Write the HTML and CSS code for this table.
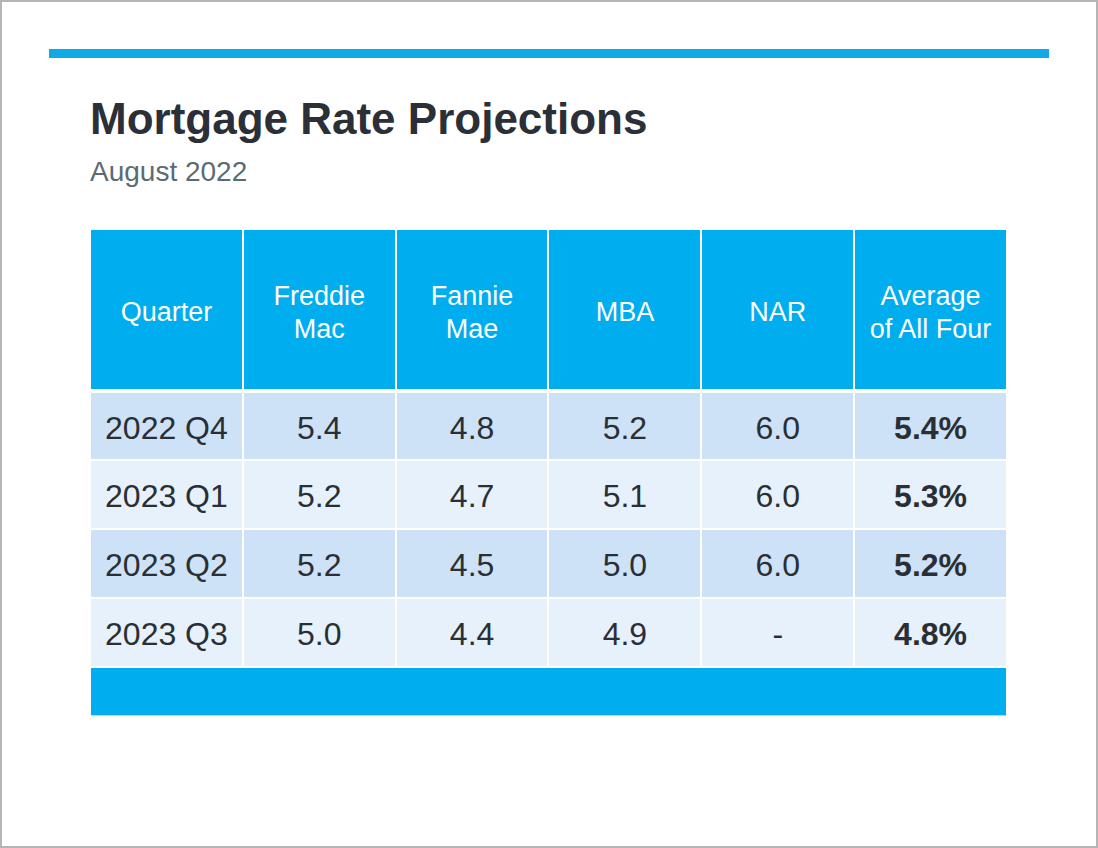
FILE: index.html
```html
<!DOCTYPE html>
<html lang="en">
<head>
<meta charset="utf-8">
<title>Mortgage Rate Projections</title>
<link rel="stylesheet" href="styles.css">
</head>
<body>
<div class="page">
  <div class="top-bar"></div>
  <div class="content">
    <h1 class="title">Mortgage Rate Projections</h1>
    <p class="subtitle">August 2022</p>
    <div class="rate-table">
      <div class="cell head"><span>Quarter</span></div>
      <div class="cell head"><span>Freddie<br>Mac</span></div>
      <div class="cell head"><span>Fannie<br>Mae</span></div>
      <div class="cell head"><span>MBA</span></div>
      <div class="cell head"><span>NAR</span></div>
      <div class="cell head"><span>Average<br>of All Four</span></div>

      <div class="cell dark">2022 Q4</div>
      <div class="cell dark">5.4</div>
      <div class="cell dark">4.8</div>
      <div class="cell dark">5.2</div>
      <div class="cell dark">6.0</div>
      <div class="cell dark avg">5.4%</div>

      <div class="cell light">2023 Q1</div>
      <div class="cell light">5.2</div>
      <div class="cell light">4.7</div>
      <div class="cell light">5.1</div>
      <div class="cell light">6.0</div>
      <div class="cell light avg">5.3%</div>

      <div class="cell dark">2023 Q2</div>
      <div class="cell dark">5.2</div>
      <div class="cell dark">4.5</div>
      <div class="cell dark">5.0</div>
      <div class="cell dark">6.0</div>
      <div class="cell dark avg">5.2%</div>

      <div class="cell light">2023 Q3</div>
      <div class="cell light">5.0</div>
      <div class="cell light">4.4</div>
      <div class="cell light">4.9</div>
      <div class="cell light">-</div>
      <div class="cell light avg">4.8%</div>

      <div class="foot"></div>
    </div>
  </div>
</div>
</body>
</html>
```

FILE: styles.css
```css
html, body {
  margin: 0;
  padding: 0;
  background: #ffffff;
}

body {
  font-family: "Liberation Sans", Arial, Helvetica, sans-serif;
}

.page {
  box-sizing: border-box;
  width: 1098px;
  height: 848px;
  border: 2px solid #b5b5b5;
  background: #ffffff;
  overflow: hidden;
}

.top-bar {
  margin: 47px 0 0 47px;
  width: 1000px;
  height: 9px;
  background: #0fa9e6;
}

.content {
  padding-left: 89px;
}

.title {
  margin: 39px 0 0 -1px;
  font-size: 44px;
  line-height: 44px;
  font-weight: 700;
  color: #2b3038;
}

.subtitle {
  margin: 17px 0 0 -1px;
  font-size: 28px;
  line-height: 28px;
  color: #5c6a73;
}

.rate-table {
  margin: 44px 0 0 0;
  width: 915px;
  display: grid;
  grid-template-columns: repeat(6, 1fr);
  grid-template-rows: 161px 66px 67px 67px 67px 48px;
  column-gap: 2px;
  row-gap: 2px;
  background: #ffffff;
}

.cell {
  box-sizing: border-box;
  display: flex;
  align-items: center;
  justify-content: center;
  text-align: center;
  font-size: 32px;
  color: #2a2e35;
  padding-top: 4px;
}

.head {
  background: #00adee;
  color: #ffffff;
  font-size: 27px;
  line-height: 33px;
  border-bottom: 2px solid #ffffff;
  padding-top: 6px;
}

.dark {
  background: #cde2f6;
}

.light {
  background: #e6f1fb;
}

.avg {
  font-weight: 700;
}

.foot {
  grid-column: 1 / -1;
  background: #00adee;
  border-bottom: 1px solid #a9e2f8;
}
```
